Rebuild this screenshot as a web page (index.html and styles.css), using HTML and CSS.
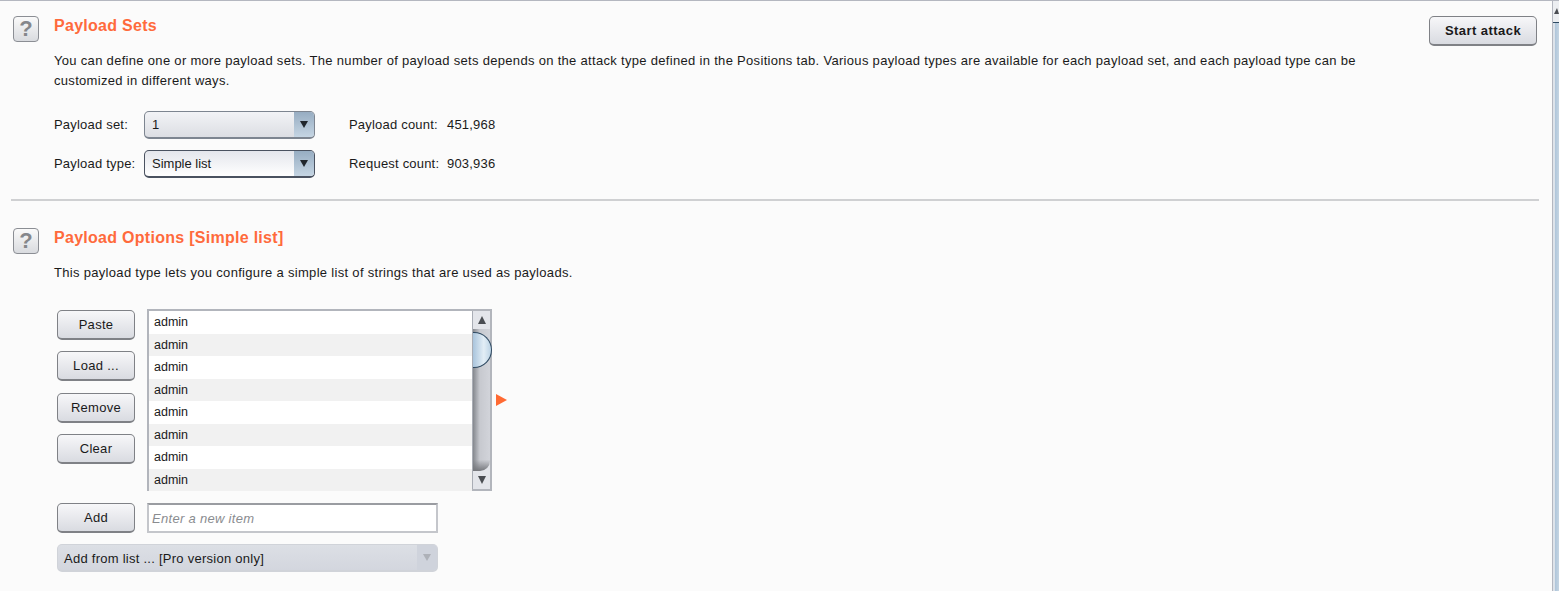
FILE: index.html
```html
<!DOCTYPE html>
<html lang="en">
<head>
  <meta charset="UTF-8">
  <meta name="viewport" content="width=device-width, initial-scale=1.0">
  <title>Intruder Payloads</title>
  <link rel="stylesheet" href="styles.css">
</head>
<body>
  <div class="page">
    <div class="content">
      <section class="panel panel-sets">
        <div class="help">?</div>
        <div class="panel-body">
          <div class="title-row">
            <h2>Payload Sets</h2>
            <button class="btn btn-start">Start attack</button>
          </div>
          <p class="desc desc-sets">You can define one or more payload sets. The number of payload sets depends on the attack type defined in the Positions tab. Various payload types are available for each payload set, and each payload type can be customized in different ways.</p>
          <div class="set-row">
            <span class="set-label">Payload set:</span>
            <div class="combo"><span class="combo-text">1</span><span class="combo-arrow"><i></i></span></div>
            <span class="count-label">Payload count:</span>
            <span class="count-value">451,968</span>
          </div>
          <div class="set-row">
            <span class="set-label">Payload type:</span>
            <div class="combo combo-focus"><span class="combo-text">Simple list</span><span class="combo-arrow"><i></i></span></div>
            <span class="count-label">Request count:</span>
            <span class="count-value">903,936</span>
          </div>
        </div>
      </section>

      <hr class="divider">

      <section class="panel panel-options">
        <div class="help">?</div>
        <div class="panel-body">
          <h2>Payload Options [Simple list]</h2>
          <p class="desc desc-options">This payload type lets you configure a simple list of strings that are used as payloads.</p>
        </div>
      </section>

      <div class="list-area">
        <div class="list-buttons">
          <button class="btn">Paste</button>
          <button class="btn">Load ...</button>
          <button class="btn">Remove</button>
          <button class="btn">Clear</button>
        </div>
        <div class="listbox">
          <ul class="items">
            <li>admin</li>
            <li>admin</li>
            <li>admin</li>
            <li>admin</li>
            <li>admin</li>
            <li>admin</li>
            <li>admin</li>
            <li>admin</li>
          </ul>
          <div class="scrollbar">
            <span class="arrow-up"></span>
            <div class="track"><div class="thumb"></div></div>
            <span class="arrow-down"></span>
          </div>
        </div>
        <span class="marker"></span>
      </div>

      <div class="add-row">
        <button class="btn">Add</button>
        <input class="new-item" type="text" placeholder="Enter a new item">
      </div>
      <div class="combo combo-disabled"><span class="combo-text">Add from list ... [Pro version only]</span><span class="combo-arrow"><i></i></span></div>
    </div>

    <div class="page-scroll">
      <span class="page-arrow"></span>
      <div class="page-thumb"></div>
    </div>
  </div>
</body>
</html>
```

FILE: styles.css
```css
* {
  box-sizing: border-box;
}
html, body {
  height: 100%;
}
body {
  margin: 0;
  background-color: #fbfbfb;
  color: #1a1a1a;
  font-family: "Liberation Sans", Arial, sans-serif;
  font-size: 13px;
  letter-spacing: 0.31px;
  overflow: hidden;
}
.page {
  display: flex;
  height: 591px;
  border-top: 1px solid #b4b7c0;
}
.content {
  width: 1552px;
  padding-left: 11px;
}
.panel {
  display: flex;
}
.panel-sets {
  padding-top: 15px;
  height: 198px;
}
.panel-options {
  padding-top: 27px;
  height: 108px;
}
.help {
  width: 26px;
  height: 26px;
  margin: 0 15px 0 2px;
  border: 1px solid #8b8e94;
  border-radius: 4px;
  background: linear-gradient(#fafafa, #d9dbdf);
  color: #85878b;
  font-size: 22px;
  font-weight: bold;
  letter-spacing: 0;
  line-height: 24px;
  text-align: center;
}
.panel-body {
  flex: 1;
}
.title-row {
  display: flex;
  justify-content: space-between;
  align-items: flex-start;
  padding-right: 15px;
}
h2 {
  margin: 0;
  padding-top: 1px;
  color: #ff6a3c;
  font-size: 16px;
  font-weight: bold;
  letter-spacing: 0.28px;
  line-height: 18px;
}
.desc {
  margin: 0;
  line-height: 20px;
}
.desc-sets {
  width: 1310px;
  margin-top: 5px;
}
.desc-options {
  margin-top: 16px;
}
.set-row {
  display: flex;
  align-items: center;
  height: 28px;
  margin-bottom: 11px;
}
.desc-sets + .set-row {
  margin-top: 20px;
}
.set-label, .count-label, .count-value {
  padding-bottom: 2px;
  letter-spacing: 0.2px;
}
.set-label {
  width: 90px;
}
.count-label {
  width: 98px;
  margin-left: 34px;
}
.combo {
  display: flex;
  width: 171px;
  height: 28px;
  border: 1px solid #7d8590;
  border-bottom-width: 2px;
  border-radius: 5px;
  background: linear-gradient(#f2f3f6, #dcdee3);
  overflow: hidden;
}
.combo-focus {
  border-color: #4a5260;
  background: linear-gradient(#e4e6ec, #ffffff);
}
.combo-text {
  flex: 1;
  padding-left: 7px;
  line-height: 25px;
}
.combo-focus .combo-text {
  letter-spacing: 0;
  line-height: 26px;
}
.combo-arrow {
  display: flex;
  align-items: center;
  justify-content: center;
  width: 20px;
  background: linear-gradient(#97adc2, #c5d5e3);
}
.combo-arrow i {
  border-left: 4px solid transparent;
  border-right: 4px solid transparent;
  border-top: 7px solid #20262c;
}
.btn {
  width: 78px;
  height: 30px;
  padding: 0;
  border: 1px solid #7f8186;
  border-bottom-width: 2px;
  border-radius: 5px;
  background: linear-gradient(#f7f7f9, #d9dbe1);
  color: #1a1a1a;
  font-family: inherit;
  font-size: 13px;
  letter-spacing: 0.3px;
}
.btn-start {
  width: 108px;
  font-weight: bold;
  letter-spacing: 0.45px;
}
.divider {
  width: 1528px;
  height: 2px;
  margin: 0;
  border: 0;
  background-color: #cfd0d2;
}
.list-area {
  display: flex;
  align-items: flex-start;
  padding-left: 46px;
}
.list-buttons {
  display: flex;
  flex-direction: column;
  gap: 11.33px;
  width: 90px;
  padding-top: 1px;
}
.listbox {
  display: flex;
  width: 345px;
  height: 182px;
  border: 2px solid #b2b5bc;
  background-color: #ffffff;
}
.items {
  flex: 1;
  margin: 0;
  padding: 0;
  font-size: 12.5px;
  letter-spacing: 0;
  list-style: none;
}
.items li {
  height: 22.5px;
  padding-left: 5px;
  line-height: 22px;
}
.items li:nth-child(even) {
  background-color: #f1f1f1;
}
.scrollbar {
  display: flex;
  flex-direction: column;
  align-items: center;
  width: 18px;
  border-left: 1px solid #a9adb5;
  background-color: #e3e5ea;
}
.arrow-up, .arrow-down {
  flex: none;
  margin: 5px 0;
  border-left: 4px solid transparent;
  border-right: 4px solid transparent;
}
.arrow-up {
  border-bottom: 8px solid #4a4d52;
}
.arrow-down {
  border-top: 8px solid #4a4d52;
}
.track {
  flex: 1;
  width: 100%;
  background:
    linear-gradient(transparent 92%, #75777c),
    linear-gradient(90deg, #85888e, #c7c9cf 40%, #d2d4da);
  border-bottom-right-radius: 10px;
}
.thumb {
  width: 19px;
  height: 36px;
  margin-top: 3px;
  border: 1px solid #2f4a62;
  border-left: 0;
  border-radius: 0 18px 18px 0;
  background: linear-gradient(90deg, #a9c4dc, #e3eef6 60%, #bcd3e5);
}
.marker {
  margin: 85px 0 0 4px;
  border-top: 6px solid transparent;
  border-bottom: 6px solid transparent;
  border-left: 11px solid #ff6a33;
}
.add-row {
  display: flex;
  align-items: center;
  gap: 12px;
  margin: 12px 0 0 46px;
}
.new-item {
  width: 291px;
  height: 30px;
  padding: 0 3px;
  border: 2px solid #c4c6cb;
  border-top-color: #9a9ca1;
  background-color: #ffffff;
  font-family: inherit;
  font-size: 13px;
  font-style: italic;
  letter-spacing: 0.3px;
}
.new-item::placeholder {
  color: #8a8c90;
  opacity: 1;
}
.combo-disabled {
  width: 381px;
  margin: 11px 0 0 46px;
  border-color: #d0d3d9;
  background: linear-gradient(#dcdfe5, #d3d6de);
}
.combo-disabled .combo-text {
  padding-left: 6px;
  letter-spacing: 0.26px;
  line-height: 27px;
}
.combo-disabled .combo-arrow {
  background: #cfd3dc;
}
.combo-disabled .combo-arrow i {
  border-top-color: #aeb1b8;
}
.page-scroll {
  display: flex;
  flex-direction: column;
  width: 7px;
  border-left: 1px solid #b4b7c0;
  background-color: #eceef1;
}
.page-arrow {
  margin: 7px 0 0 1px;
  width: 5px;
  border-left: 3px solid transparent;
  border-right: 2px solid transparent;
  border-bottom: 6px solid #4a4d52;
}
.page-thumb {
  flex: 1;
  margin-top: 8px;
  border-top: 1px solid #2f4a62;
  background: linear-gradient(90deg, #dde3ea 0, #dde3ea 2px, #aec5da 2px, #c5d5e3);
}
```
